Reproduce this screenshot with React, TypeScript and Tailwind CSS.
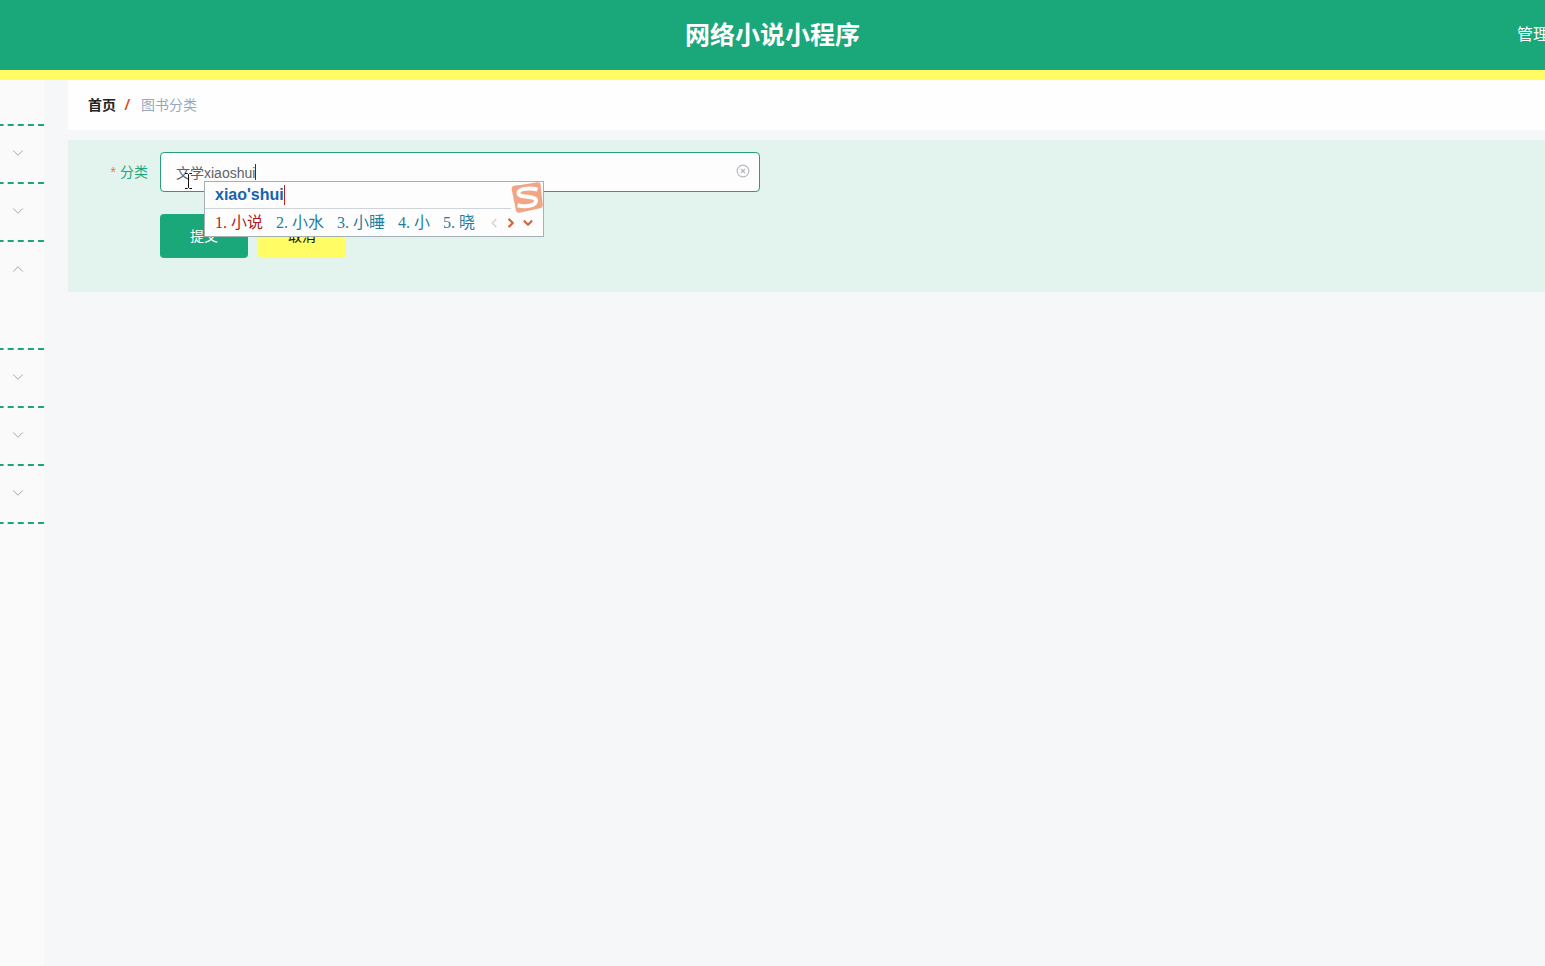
import React, { useState } from 'react';
import { ChevronDown, ChevronLeft, ChevronRight, ChevronUp, CircleX } from 'lucide-react';

const menuItems = [
  { id: 1, open: false },
  { id: 2, open: false },
  { id: 3, open: true },
  { id: 4, open: false },
  { id: 5, open: false },
  { id: 6, open: false },
];

const candidates = ['小说', '小水', '小睡', '小', '晓'];

const Header: React.FC = () => (
  <header className="grid h-20 grid-cols-[1fr_auto_1fr] items-center border-b-10 border-[#fffc64] bg-[#1aa87a] text-white">
    <div />
    <h1 className="text-[25px] leading-9 font-bold">网络小说小程序</h1>
    <div className="w-7 justify-self-end overflow-hidden text-base whitespace-nowrap">管理</div>
  </header>
);

const Sidebar: React.FC = () => (
  <aside className="flex w-11 shrink-0 justify-end overflow-hidden bg-[#fafafa]">
    <nav className="w-52 shrink-0">
      <div className="h-[46px] border-b-2 border-dashed border-[#1aa87a]" />
      {menuItems.map((item) => (
        <div
          key={item.id}
          className={`border-b-2 border-dashed border-[#1aa87a] ${item.open ? 'h-[108px]' : 'h-[58px]'}`}
        >
          <button type="button" aria-label="菜单" className="flex h-[54px] w-full items-center justify-end pr-[17px]">
            {item.open ? (
              <ChevronUp size={18} strokeWidth={1} className="text-[#888888]" />
            ) : (
              <ChevronDown size={18} strokeWidth={1} className="text-[#888888]" />
            )}
          </button>
        </div>
      ))}
    </nav>
  </aside>
);

const InputMethodPopup: React.FC = () => (
  <div className="absolute top-[29px] left-11 z-10 h-14 w-[340px] border border-[#a3b0b5] bg-[#fdfdfd]">
    <div className="mr-8 flex h-[27px] items-center border-b border-[#cdd3d6] pl-[10px]">
      <span className="border-r border-[#c02020] text-base leading-5 font-bold text-[#1463b0]">xiao'shui</span>
    </div>
    <div className="flex h-[27px] items-center pl-[10px] text-base leading-5">
      <ol className="flex gap-[13px] text-[#1f7f9f]">
        {candidates.map((word, index) => (
          <li key={word} className={index === 0 ? 'flex text-[#b01c24]' : 'flex'}>
            <span className="w-4 font-['Liberation_Serif',serif]">{index + 1}.</span>
            <span>{word}</span>
          </li>
        ))}
      </ol>
      <div className="ml-3 flex gap-[3px] text-[#d2683c]">
        <ChevronLeft size={14} strokeWidth={3} className="text-[#d5d5d5]" />
        <ChevronRight size={14} strokeWidth={4} />
        <ChevronDown size={14} strokeWidth={4} />
      </div>
    </div>
    <svg className="absolute top-0 right-0" width="32" height="32" viewBox="0 0 32 32" fill="none">
      <path
        d="M4 3.5C12 3 19 1.500 26 .300c2.500-.2 3.300.5 3.500 2l2.200 20c.2 2.200-.5 3.400-2.700 3.900L8.500 30.700c-2.300.3-3.200-.5-3.600-2.600L.7 7.500C.4 5.200 1.500 3.800 4 3.500Z"
        fill="#f0a584"
      />
      <path
        d="M26.500 7.500C21 6.300 8 5.500 7.500 11c-.5 5.500 17.500 2.200 17.500 7.500 0 6-11 6.500-18.500 4.800"
        stroke="#fdfdfd"
        strokeWidth="4"
      />
    </svg>
  </div>
);

const CategoryForm: React.FC = () => {
  const [category, setCategory] = useState('文学xiaoshui');

  return (
    <form
      className="mt-[10px] bg-[#e2f4ed] pt-3 pb-[34px] pl-[42px]"
      onSubmit={(e) => e.preventDefault()}
    >
      <div className="flex">
        <label htmlFor="category" className="w-[50px] pr-3 text-right leading-10 whitespace-nowrap text-[#1aa87a]">
          <span className="mr-1 text-[#f56c6c]">*</span>分类
        </label>
        <div className="relative w-[600px]">
          <input
            id="category"
            type="text"
            value={category}
            onChange={(e) => setCategory(e.target.value)}
            className="h-10 w-full rounded border border-[#2a9d7a] bg-[#fdfdfd] px-[15px] text-[#606266] outline-none"
          />
          <span className="absolute top-3 left-[95px] h-4 w-px bg-[#333333]" />
          <button type="button" aria-label="清空" className="absolute top-3 right-[10px]" onClick={() => setCategory('')}>
            <CircleX size={14} strokeWidth={2} className="text-[#b5b8bf]" />
          </button>
          <svg className="absolute top-[21px] left-6 z-20" width="9" height="16" viewBox="0 0 9 16" fill="none">
            <path d="M1 .5H3.500L4.500 1.500L5.500.5H8M4.500 1.500V14.500M1 15.500H3.500L4.500 14.500L5.500 15.500H8" stroke="#111111" />
          </svg>
          <InputMethodPopup />
        </div>
      </div>
      <div className="mt-[22px] flex gap-[10px] pl-[50px]">
        <button type="submit" className="h-11 w-22 rounded bg-[#1aa87a] text-white">
          提交
        </button>
        <button type="button" className="h-11 w-22 rounded bg-[#fffc64] text-[#111111]">
          取消
        </button>
      </div>
    </form>
  );
};

const App: React.FC = () => {
  return (
    <div className="flex min-h-screen flex-col bg-[#f5f7f9] font-['Liberation_Sans','Noto_Sans_CJK_SC',sans-serif] text-sm">
      <Header />
      <div className="flex grow">
        <Sidebar />
        <main className="ml-6 grow">
          <nav className="flex h-[50px] items-center gap-[9px] bg-[#fefefe] px-5">
            <a href="#" className="font-bold text-[#222222]">
              首页
            </a>
            <span className="w-[7px] text-sm font-bold text-[#d9481c] italic">/</span>
            <span className="text-[#97a8be]">图书分类</span>
          </nav>
          <CategoryForm />
        </main>
      </div>
    </div>
  );
};

export default App;
